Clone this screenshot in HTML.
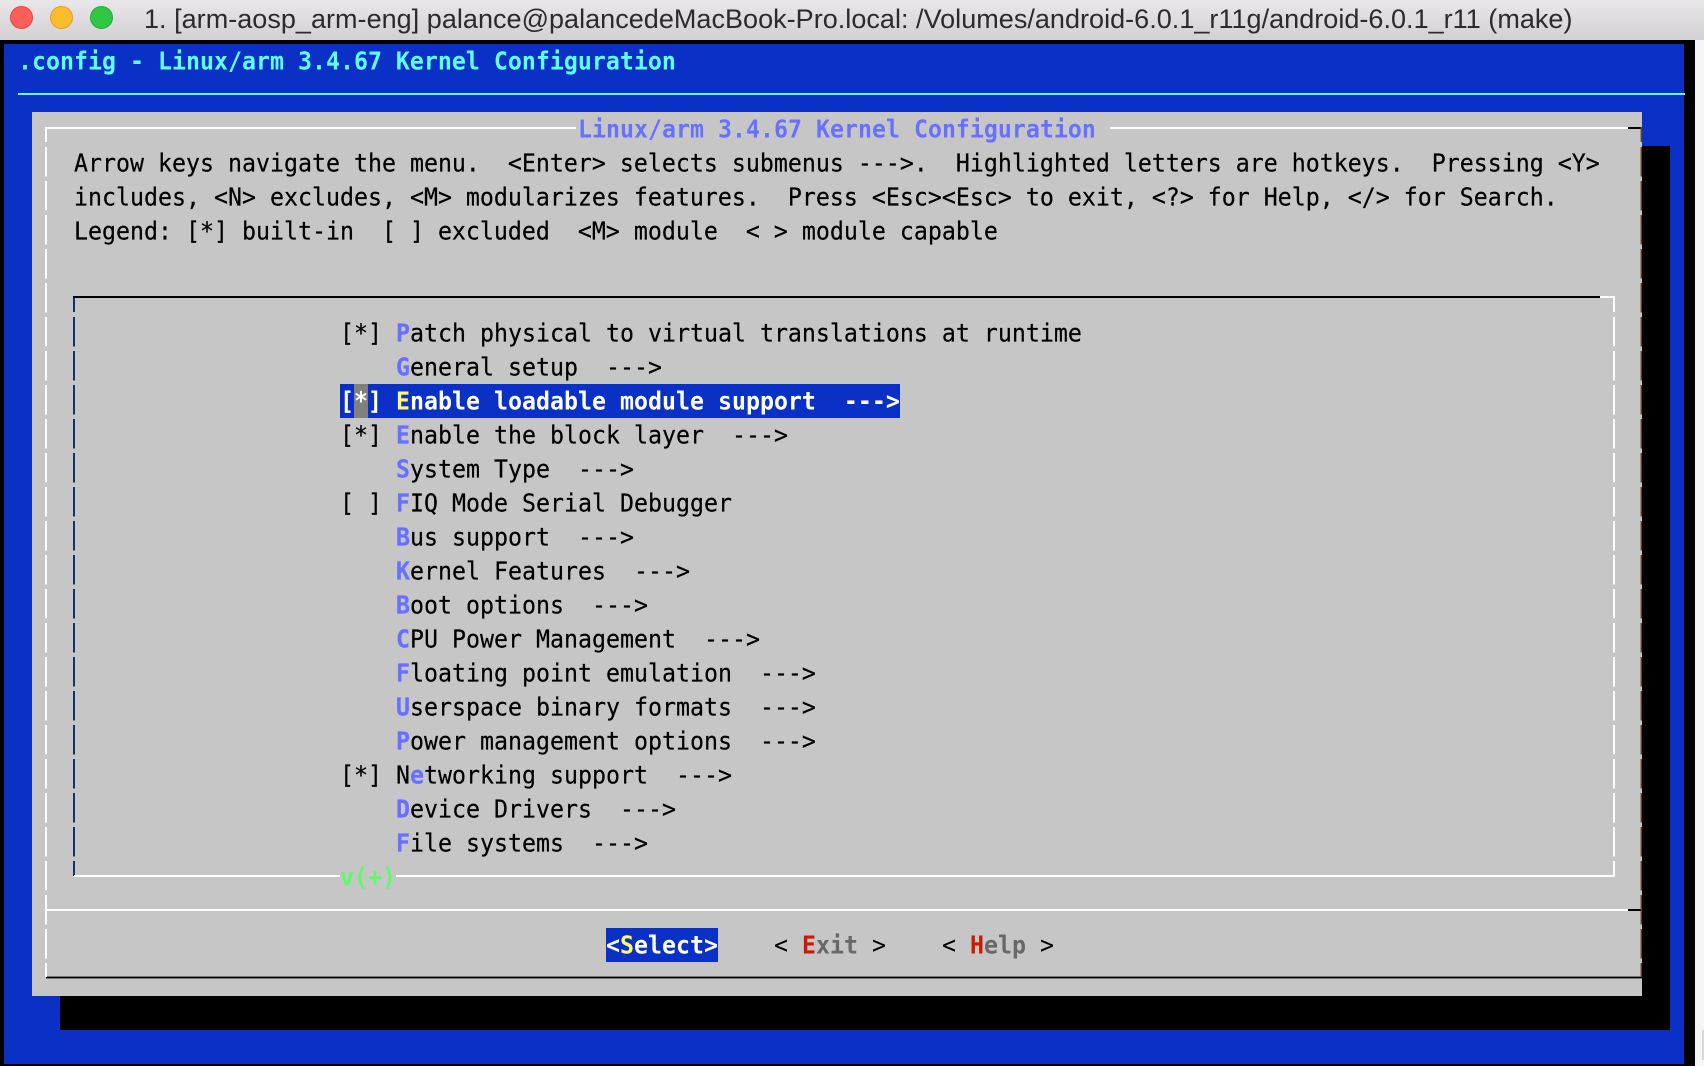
<!DOCTYPE html>
<html><head><meta charset="utf-8"><title>make</title>
<style>
html,body{margin:0;padding:0;width:1704px;height:1066px;overflow:hidden;background:#f5f5f5}
#bar{position:absolute;left:0;top:0;width:1704px;height:40px;background:linear-gradient(#e9e7e9,#d2d0d2)}
.tl{position:absolute;top:6px;width:23px;height:23px;border-radius:50%;box-sizing:border-box}
#ttl{position:absolute;left:144px;top:0;font:27px/38px "Liberation Sans",sans-serif;letter-spacing:.03px;color:#2b2b2b;white-space:pre}
.b{position:absolute}
.r{position:absolute;height:34px;line-height:34px;font-family:"DejaVu Sans Mono",monospace;font-size:23.25px;white-space:pre;color:#000;margin-top:1px;transform:scaleY(1.06);transform-origin:50% 55%;-webkit-text-stroke:.2px currentColor;filter:blur(.3px)}
.h{color:#6871ff;font-weight:bold}
.bd{font-weight:bold;-webkit-text-stroke:0}
.w{background:#fff}
.n{font-weight:normal}
</style></head><body>
<div id="bar"></div>
<div class="tl" style="left:10px;background:#fc5f57;border:1px solid #e0483f"></div>
<div class="tl" style="left:50px;background:#fdbc2e;border:1px solid #dfa023"></div>
<div class="tl" style="left:90px;background:#2fc843;border:1px solid #27aa35"></div>
<div id="ttl">1. [arm-aosp_arm-eng] palance@palancedeMacBook-Pro.local: /Volumes/android-6.0.1_r11g/android-6.0.1_r11 (make)</div>
<div class="b" style="left:0;top:40px;width:1695px;height:1026px;background:#000"></div>
<div class="b" style="left:4px;top:44px;width:1680px;height:1020px;background:#0a30c5"></div>
<div class="b" style="left:60px;top:146px;width:1610px;height:884px;background:#000"></div>
<div class="b" style="left:32px;top:112px;width:1610px;height:884px;background:#c6c6c6"></div>

<!-- header -->
<div class="r bd" style="left:18px;top:44px;color:#60fdff">.config - Linux/arm 3.4.67 Kernel Configuration</div>
<div class="b" style="left:18px;top:93px;width:1667px;height:2px;background:#60fdff"></div>

<!-- outer dialog lines -->
<div class="b w" style="left:46px;top:127px;width:530px;height:2px"></div>
<div class="b w" style="left:1110px;top:127px;width:518px;height:2px"></div>
<div class="b" style="left:1628px;top:127px;width:14px;height:2px;background:#000"></div>
<div class="b w" style="left:46px;top:909px;width:1582px;height:2px"></div>
<div class="b" style="left:1628px;top:909px;width:14px;height:2px;background:#000"></div>
<div class="b" style="left:46px;top:976px;width:1596px;height:3px;background:#777"></div>
<div class="b" style="left:46px;top:977px;width:1596px;height:1px;background:#000"></div>

<svg class="b" style="left:0;top:0" width="1704" height="1066">
<g id="lv" stroke="#fff" stroke-width="2" stroke-dasharray="29.5 4.5" stroke-dashoffset="-0.0">
<path d="M46 147V977"/>
<path d="M1614 317V876"/>
</g>
<path d="M46 127V142M1614 297V312" stroke="#fff" stroke-width="2"/>
<path d="M1641.3 147V977" stroke="#6b4018" stroke-width="1.5" stroke-dasharray="29.5 4.5"/>
<path d="M1641.3 127V142" stroke="#6b4018" stroke-width="1.5"/>
<path d="M74 317V876" stroke="#123468" stroke-width="2" stroke-dasharray="29.5 4.5"/>
<path d="M74 297V312" stroke="#123468" stroke-width="2"/>
</svg>

<!-- title -->
<div class="r bd" style="left:578px;top:112px;color:#6871ff">Linux/arm 3.4.67 Kernel Configuration</div>

<!-- help text -->
<div class="r" style="left:74px;top:146px">Arrow keys navigate the menu.  &lt;Enter&gt; selects submenus ---&gt;.  Highlighted letters are hotkeys.  Pressing &lt;Y&gt;</div>
<div class="r" style="left:74px;top:180px">includes, &lt;N&gt; excludes, &lt;M&gt; modularizes features.  Press &lt;Esc&gt;&lt;Esc&gt; to exit, &lt;?&gt; for Help, &lt;/&gt; for Search.</div>
<div class="r" style="left:74px;top:214px">Legend: [*] built-in  [ ] excluded  &lt;M&gt; module  &lt; &gt; module capable</div>

<!-- inner box -->
<div class="b" style="left:73px;top:296px;width:1527px;height:2px;background:#000"></div>
<div class="b w" style="left:1600px;top:296px;width:15px;height:2px"></div>
<div class="b w" style="left:74px;top:875px;width:1541px;height:2px"></div>

<!-- menu -->
<div class="r" style="left:340px;top:316px">[*] <span class="h">P</span>atch physical to virtual translations at runtime</div>
<div class="r" style="left:396px;top:350px"><span class="h">G</span>eneral setup  ---&gt;</div>
<div class="b" style="left:340px;top:384px;width:560px;height:34px;background:#0a30c5"></div>
<div class="b" style="left:354px;top:384px;width:14px;height:34px;background:#808080"></div>
<div class="r bd" style="left:340px;top:384px;color:#fff">[*] <span style="color:#fffc67">E</span>nable loadable module support  ---&gt;</div>
<div class="r" style="left:340px;top:418px">[*] <span class="h">E</span>nable the block layer  ---&gt;</div>
<div class="r" style="left:396px;top:452px"><span class="h">S</span>ystem Type  ---&gt;</div>
<div class="r" style="left:340px;top:486px">[ ] <span class="h">F</span>IQ Mode Serial Debugger</div>
<div class="r" style="left:396px;top:520px"><span class="h">B</span>us support  ---&gt;</div>
<div class="r" style="left:396px;top:554px"><span class="h">K</span>ernel Features  ---&gt;</div>
<div class="r" style="left:396px;top:588px"><span class="h">B</span>oot options  ---&gt;</div>
<div class="r" style="left:396px;top:622px"><span class="h">C</span>PU Power Management  ---&gt;</div>
<div class="r" style="left:396px;top:656px"><span class="h">F</span>loating point emulation  ---&gt;</div>
<div class="r" style="left:396px;top:690px"><span class="h">U</span>serspace binary formats  ---&gt;</div>
<div class="r" style="left:396px;top:724px"><span class="h">P</span>ower management options  ---&gt;</div>
<div class="r" style="left:340px;top:758px">[*] N<span class="h">e</span>tworking support  ---&gt;</div>
<div class="r" style="left:396px;top:792px"><span class="h">D</span>evice Drivers  ---&gt;</div>
<div class="r" style="left:396px;top:826px"><span class="h">F</span>ile systems  ---&gt;</div>
<div class="b" style="left:340px;top:870px;width:56px;height:14px;background:#c6c6c6"></div>
<div class="r bd" style="left:340px;top:860px;color:#5ffa68">v(+)</div>

<!-- buttons -->
<div class="b" style="left:606px;top:928px;width:112px;height:34px;background:#0a30c5"></div>
<div class="r bd" style="left:606px;top:928px;color:#fff">&lt;<span style="color:#fffc67">S</span>elect&gt;</div>
<div class="r bd" style="left:774px;top:928px;color:#686868"><span class="n" style="color:#000">&lt;</span> <span style="color:#c91b00">E</span>xit <span class="n" style="color:#000">&gt;</span></div>
<div class="r bd" style="left:942px;top:928px;color:#686868"><span class="n" style="color:#000">&lt;</span> <span style="color:#c91b00">H</span>elp <span class="n" style="color:#000">&gt;</span></div>

<!-- scrollbar hint -->
<div class="b" style="left:1702px;top:1030px;width:2px;height:30px;background:#d8d8d8"></div>
</body></html>
